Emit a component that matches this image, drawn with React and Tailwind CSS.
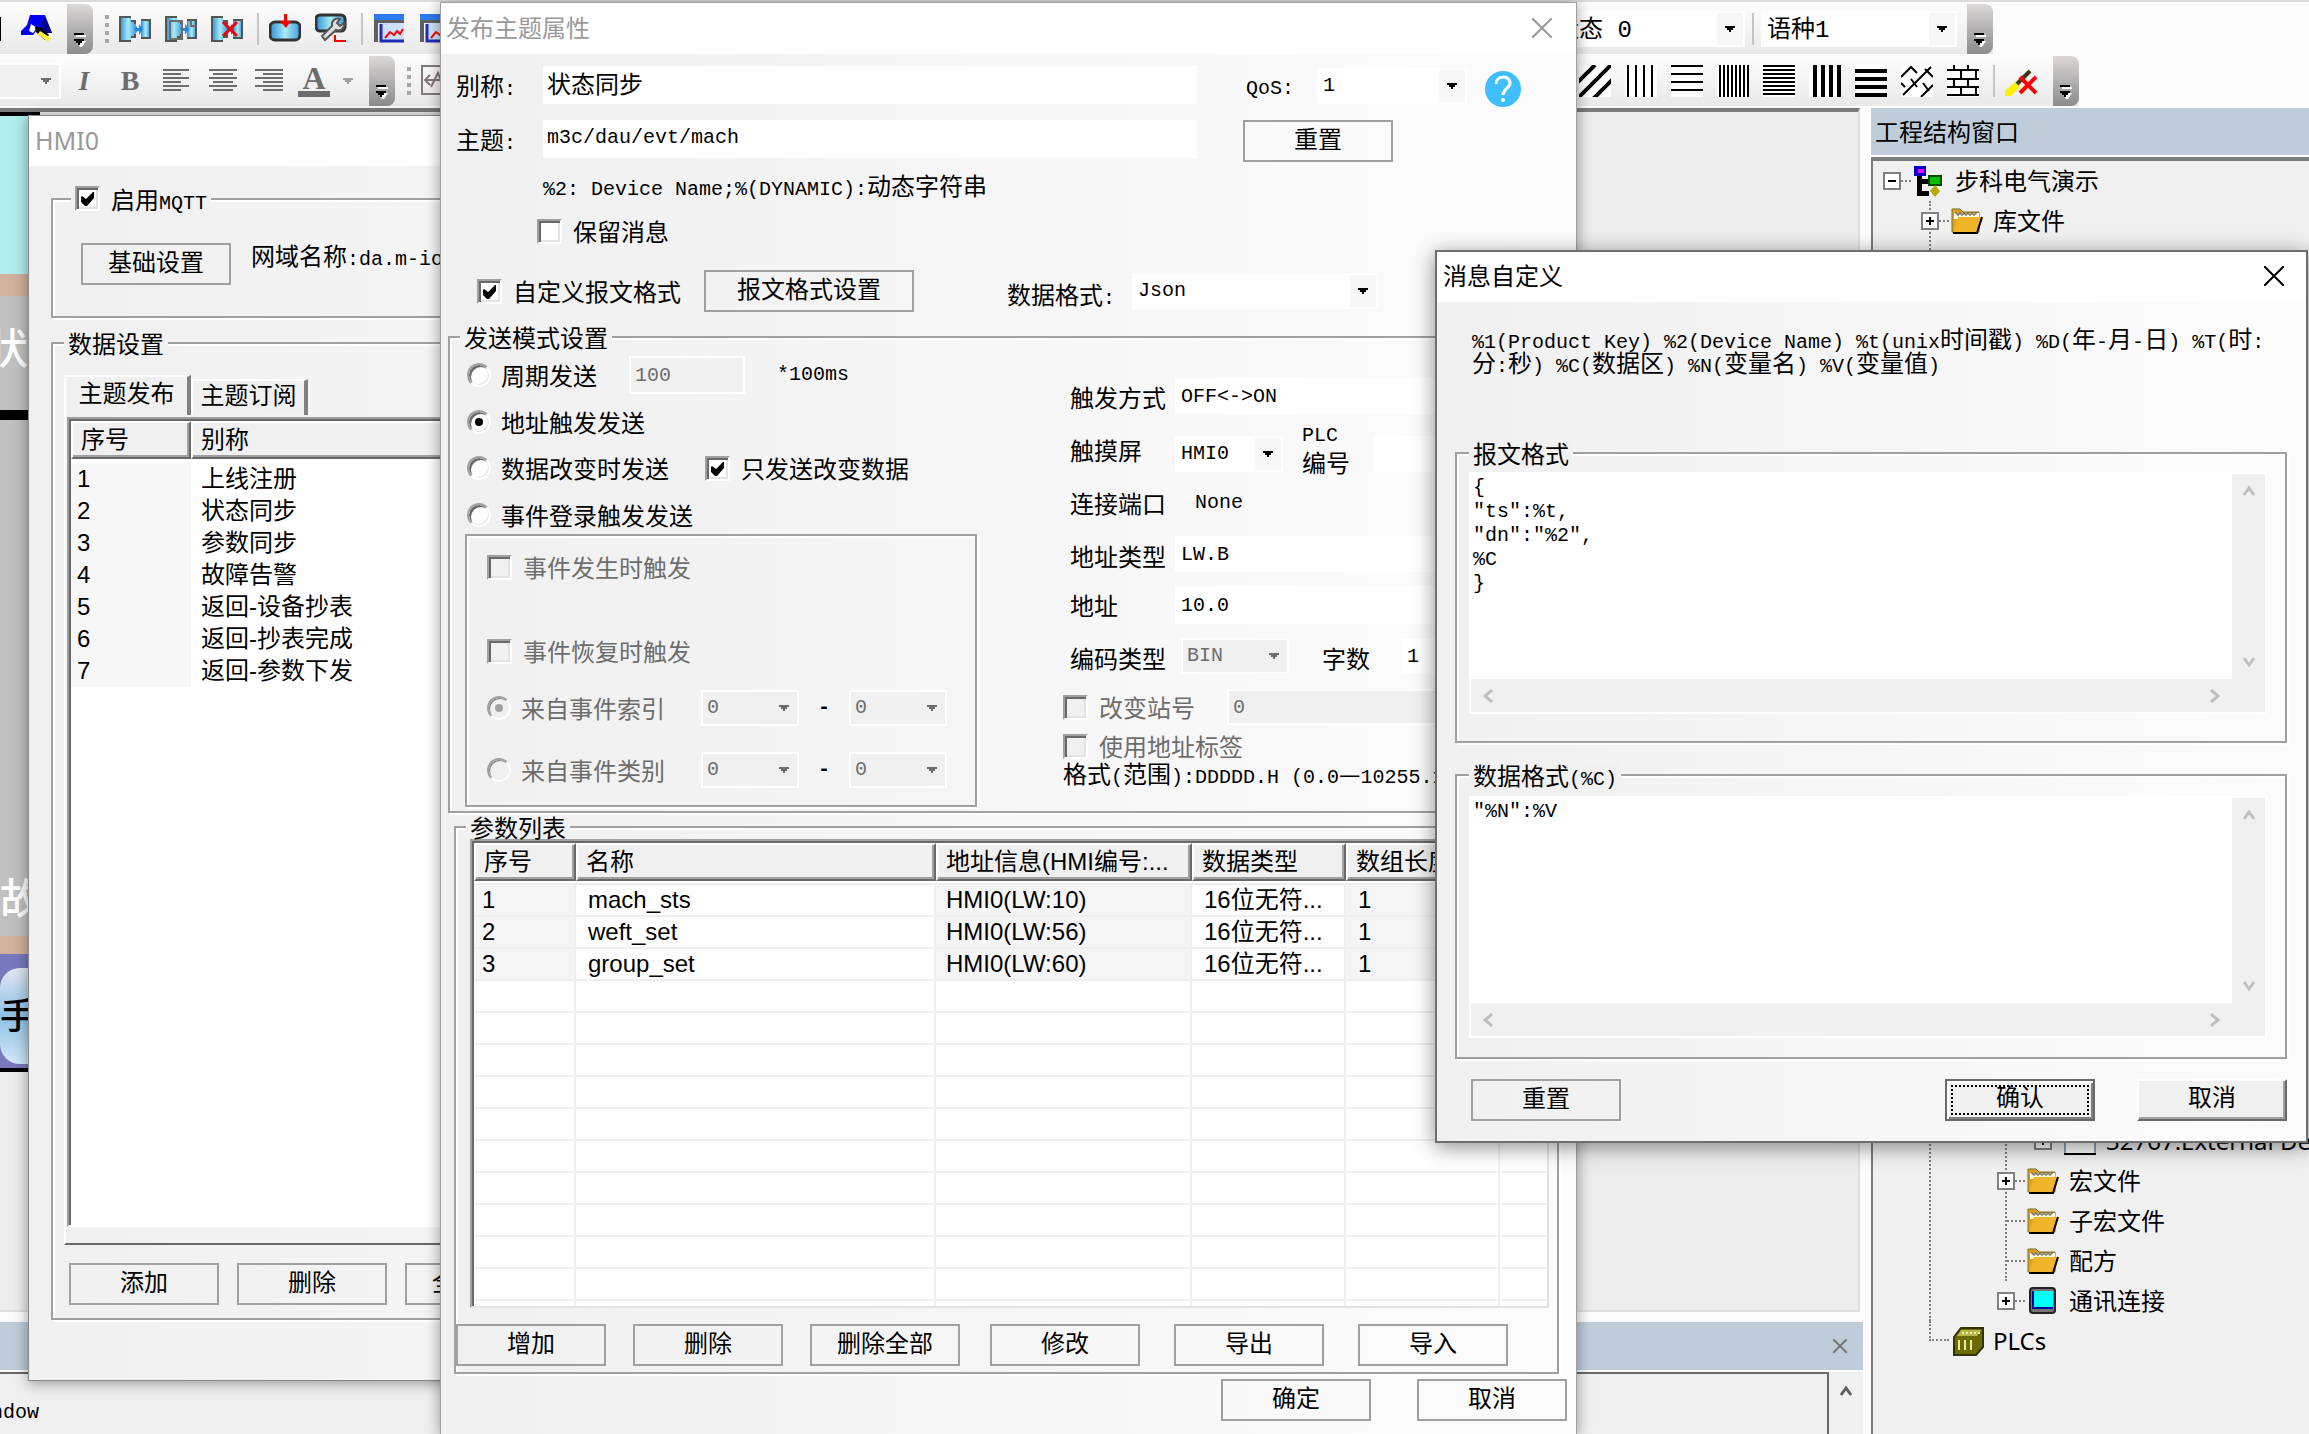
import { useState } from 'react';

const mono = "[font-family:'Liberation_Mono','Noto_Sans_CJK_SC',monospace]";
const sans = "[font-family:'Liberation_Sans','Noto_Sans_CJK_SC',sans-serif]";
const ui = "[font-family:'Noto_Sans','Noto_Sans_CJK_SC',sans-serif]";

const topics = ['上线注册', '状态同步', '参数同步', '故障告警', '返回-设备抄表', '返回-抄表完成', '返回-参数下发'];

const params = [
    { name: 'mach_sts', address: 'HMI0(LW:10)', type: '16位无符...', length: 1 },
    { name: 'weft_set', address: 'HMI0(LW:56)', type: '16位无符...', length: 1 },
    { name: 'group_set', address: 'HMI0(LW:60)', type: '16位无符...', length: 1 },
];

const emptyRows = Array.from({ length: 11 }, (_, i) => i);

// Chinese runs are a full em, latin runs half an em
const T = ({ children }) => (
    <span className="block h-6 leading-5 whitespace-pre">
        {children.split(/([\u2014\u2e80-\u9fff]+)/).map((part, i) =>
            i % 2 ? (
                <span key={i} className="text-[24px] leading-none [font-family:'Noto_Sans_CJK_SC',sans-serif]">{part}</span>
            ) : (
                <span key={i} className="text-[20px] leading-none">{part}</span>
            )
        )}
    </span>
);

const Button = ({ children, className = 'w-[150px]' }) => (
    <button type="button" className={`flex h-[42px] shrink-0 items-center justify-center overflow-hidden border-2 border-[#a0a0a0] pt-0.5 text-[24px] leading-6 ${className}`}>
        {children}
    </button>
);

const Check = ({ label, defaultChecked, disabled, className = '' }) => {
    const [checked, setChecked] = useState(!!defaultChecked);

    return (
        <label className={`flex shrink-0 items-center gap-[11px] ${disabled ? 'text-[#6d6d6d]' : ''} ${className}`}>
            <span className="grid">
                <input
                    type="checkbox"
                    checked={checked}
                    disabled={disabled}
                    onChange={(e) => setChecked(e.target.checked)}
                    className="col-start-1 row-start-1 h-[25px] w-[25px] appearance-none border-2 border-t-[#a0a0a0] border-r-white border-b-white border-l-[#a0a0a0] bg-white shadow-[inset_2px_2px_0_#696969,inset_-2px_-2px_0_#e3e3e3] disabled:bg-[#f0f0f0]"
                />
                {checked && (
                    <svg viewBox="0 0 25 25" className="pointer-events-none col-start-1 row-start-1 h-[25px] w-[25px]">
                        <path d="M6 11v5l4 4h2l7-8V6h-1l-7 7-4-3z" fill="#000" />
                    </svg>
                )}
            </span>
            <T>{label}</T>
        </label>
    );
};

const Radio = ({ label, name, defaultChecked, disabled }) => (
    <label className={`flex shrink-0 items-center gap-2.5 ${disabled ? 'text-[#6d6d6d]' : ''}`}>
        <input
            type="radio"
            name={name}
            defaultChecked={defaultChecked}
            disabled={disabled}
            className="grid h-6 w-6 appearance-none place-items-center rounded-full border-2 border-t-[#a0a0a0] border-r-white border-b-white border-l-[#a0a0a0] bg-white shadow-[inset_2px_2px_0_#696969,inset_-1px_-1px_0_#e3e3e3] before:h-2 before:w-2 before:rounded-full checked:before:bg-black disabled:bg-[#f0f0f0] disabled:shadow-[inset_1px_1px_0_#808080] disabled:checked:before:bg-[#a0a0a0]"
        />
        <T>{label}</T>
    </label>
);

const Arrow = ({ className = 'fill-black' }) => (
    <svg viewBox="0 0 10 6" className={`h-1.5 w-2.5 ${className}`}>
        <path d="M0 0h10v2H8v2H6v2H4V4H2V2H0z" />
    </svg>
);

const Select = ({ value, label, disabled, className, size = 'text-[20px]' }) => (
    <span className={`grid h-9 shrink-0 border-2 border-white ${disabled ? 'bg-[#f0f0f0]' : 'bg-white'} ${className}`}>
        <select aria-label={label} disabled={disabled} className={`col-start-1 row-start-1 h-8 w-full appearance-none pl-1 opacity-100 disabled:text-[#6d6d6d] ${size}`}>
            <option>{value}</option>
        </select>
        <span className={`pointer-events-none col-start-1 row-start-1 flex h-8 w-[26px] items-center justify-center justify-self-end ${disabled ? '' : 'bg-[#f7f7f7]'}`}>
            <Arrow className={disabled ? 'fill-[#6d6d6d]' : 'fill-black'} />
        </span>
    </span>
);

const Field = ({ value, label, disabled, className = 'h-9' }) => (
    <input
        aria-label={label}
        defaultValue={value}
        disabled={disabled}
        className={`min-w-0 border-2 border-white bg-white px-1 text-[20px] disabled:bg-[#f0f0f0] disabled:text-[#6d6d6d] ${className}`}
    />
);

const Group = ({ legend, className, legendClass = 'ml-2.5', children }) => (
    <fieldset className={`min-w-0 border-2 border-[#a0a0a0] shadow-[2px_2px_0_#fff,inset_2px_2px_0_#fff] ${className}`}>
        <legend className={`flex items-center bg-[#f1f1f1] ${legendClass}`}>
            <span className="px-1">{legend}</span>
        </legend>
        {children}
    </fieldset>
);

const Close = ({ className }) => (
    <button type="button" aria-label="关闭">
        <svg viewBox="0 0 20 20" className={`h-5 w-5 fill-none ${className}`}>
            <path d="M0 0l20 20M20 0L0 20" strokeWidth="2" />
        </svg>
    </button>
);

/* ---------- toolbars ---------- */

const Overflow = ({ className = '' }) => (
    <button type="button" aria-label="工具栏选项" className={`flex h-[50px] w-[26px] shrink-0 items-end justify-center rounded-r-lg bg-gradient-to-b from-[#dcd8d8] to-[#8c8c8c] pb-1.5 ${className}`}>
        <svg viewBox="0 0 14 16" className="h-4 w-3.5">
            <path d="M3 3h10v2H3zM3 9h10l-4 6H7z" fill="#fff" />
            <path d="M1 1h10v2H1zM1 7h10v2H9v2H7v2H5v-2H3V9H1z" fill="#000" />
        </svg>
    </button>
);

const Grip = () => (
    <span className="ml-3 flex w-1 shrink-0 flex-col gap-1">
        <i className="h-1 w-1 bg-[#a8a8a8]" />
        <i className="h-1 w-1 bg-[#a8a8a8]" />
        <i className="h-1 w-1 bg-[#a8a8a8]" />
        <i className="h-1 w-1 bg-[#a8a8a8]" />
    </span>
);

const Sep = ({ className = '' }) => <span className={`h-8 w-0.5 shrink-0 bg-[#c4c4c4] ${className}`} />;

const Tool = ({ label, children }) => (
    <button type="button" aria-label={label} className="h-8 w-8 shrink-0">
        <svg viewBox="0 0 32 32" className="h-8 w-8">{children}</svg>
    </button>
);

const Doors = ({ children }) => (
    <>
        <defs>
            <linearGradient id="door">
                <stop offset="0" stopColor="#2f8fd8" />
                <stop offset=".5" stopColor="#a8ecf4" />
                <stop offset="1" stopColor="#3f9be0" />
            </linearGradient>
        </defs>
        <path d="M1 3h11v4h5v18h-5v4H1z" fill="url(#door)" />
        <path d="M12 4H1v24h11M12 8h4v3M12 24h4v-3" fill="none" stroke="#555" strokeWidth="2" />
        <path d="M22 7h9v18h-9z" fill="url(#door)" />
        <path d="M22 7h9v18h-9" fill="none" stroke="#555" strokeWidth="2" />
        <path d="M15 16l3-3v2h2v-4l4 5-4 6v-4h-2v2z" fill="#2389dc" />
        {children}
    </>
);

const Chart = () => (
    <>
        <path d="M1 1h30v6H1z" fill="#2d7bf0" />
        <path d="M1 7h30v3H5v19H1z" fill="#606060" />
        <path d="M7 10h24v19H7z" fill="#cfe0fb" />
        <path d="M8 11v17h23" fill="none" stroke="#1c2fb4" strokeWidth="3" />
        <path d="M12 25l5-6 4 3 3-4 3 3 3-5" fill="none" stroke="#f00" strokeWidth="2" />
    </>
);

const Toolbar = () => (
    <header className="flex shrink-0 flex-col gap-0.5 bg-[#fcfcfc] pb-0.5">
        <div className="h-0.5 bg-[#dcdcdc]" />
        <div className="flex h-[50px] w-[1993px] items-center bg-gradient-to-b from-[#fdfdfd] to-[#e9e9e9]">
            <div className="flex w-[1549px] shrink-0 items-center">
                <span className="mr-5 h-6 w-px bg-black" />
                <Tool label="填充">
                    <path d="M9 2h15l7 18h-9l-4-6-6 8H0v-4l6-6z" fill="#0000f0" />
                    <path d="M24 4l7 16h-6l-5-10z" fill="#00008b" />
                    <path d="M10 11l6 4-4 5-4-2z" fill="#fff" />
                    <path d="M14 14h6l8 8-4 5-9-8z" fill="#000" />
                    <path d="M19 18l11 7-3 4-10-8z" fill="#ffef3c" />
                </Tool>
                <Overflow className="ml-3.5" />
                <Grip />
                <div className="ml-2.5 flex gap-3.5">
                    <Tool label="打开窗口"><Doors /></Tool>
                    <Tool label="全部窗口"><Doors><path d="M5 8h12v18H5zM26 7v6h5" fill="none" stroke="#6d6d6d" strokeWidth="2" /></Doors></Tool>
                    <Tool label="关闭窗口"><Doors><path d="M12 9l14 14M26 9L12 23" stroke="#f00000" strokeWidth="3" /></Doors></Tool>
                </div>
                <Sep className="mr-2.5 ml-3.5" />
                <div className="flex gap-3.5">
                    <Tool label="下载">
                        <rect x="1" y="9" width="30" height="18" rx="5" fill="url(#door)" stroke="#333" strokeWidth="3" />
                        <path d="M15 1h3v7h4l-5 7-6-7h4z" fill="#f00" />
                    </Tool>
                    <Tool label="调试">
                        <rect x="1" y="2" width="29" height="16" rx="4" fill="url(#door)" stroke="#333" strokeWidth="3" />
                        <path d="M25 6a6 6 0 0 0-8 7L7 23l3 4 11-10a6 6 0 0 0 8-7l-4 3-3-3z" fill="#ddd" stroke="#555" strokeWidth="2" />
                        <path d="M20 22v6h11" fill="none" stroke="#f00" strokeWidth="2" />
                    </Tool>
                </div>
                <Sep className="mr-2.5 ml-3.5" />
                <div className="flex gap-3.5">
                    <Tool label="趋势图"><Chart /></Tool>
                    <Tool label="曲线图"><Chart /></Tool>
                </div>
            </div>
            <Select label="状态" value="状态 0" size="text-[24px]" className="w-[196px]" />
            <Sep className="mx-[7px]" />
            <Select label="语种" value="语种1" size="text-[24px]" className="w-[196px]" />
            <Overflow className="ml-2.5" />
        </div>
        <div className="flex h-[50px] w-[2079px] items-center bg-gradient-to-b from-[#fdfdfd] to-[#e9e9e9]">
            <div className="flex w-[1579px] shrink-0 items-center">
                <span className="flex h-9 w-[61px] items-center justify-end border-2 border-l-0 border-white bg-[#f0f0f0] pr-2">
                    <Arrow className="fill-[#6d6d6d]" />
                </span>
                <div className="ml-[7px] flex gap-3.5 text-[#6d6d6d]">
                    <button type="button" className="h-8 w-8 text-[28px] leading-8 font-bold italic [font-family:'Liberation_Serif',serif]">I</button>
                    <button type="button" className="h-8 w-8 text-[28px] leading-8 font-bold [font-family:'Liberation_Serif',serif]">B</button>
                    <Tool label="左对齐"><path d="M3 5h26M3 9h18M3 13h26M3 17h18M3 21h26M3 25h18" stroke="#6d6d6d" strokeWidth="2" /></Tool>
                    <Tool label="居中"><path d="M3 5h28M7 9h20M3 13h28M7 17h20M3 21h28M7 25h20" stroke="#6d6d6d" strokeWidth="2" /></Tool>
                    <Tool label="右对齐"><path d="M3 5h28M11 9h20M3 13h28M11 17h20M3 21h28M11 25h20" stroke="#6d6d6d" strokeWidth="2" /></Tool>
                    <button type="button" className="h-8 w-8 border-b-[6px] border-[#6d6d6d] text-[32px] leading-6 font-bold [font-family:'Liberation_Serif',serif]">A</button>
                </div>
                <Arrow className="ml-[13px] fill-[#a0a0a0]" />
                <Overflow className="ml-4" />
                <Grip />
                <span className="ml-2.5 flex">
                    <Tool label="对齐"><path d="M1 1h30v28H1zM4 15h24M9 10l-5 5 5 5M10 22l7-14 6 14" fill="none" stroke="#857878" strokeWidth="2" /></Tool>
                </span>
            </div>
            <div className="flex gap-3.5">
                <Tool label="斜线"><path d="M0 0h32v32H0z" fill="#fff" /><path d="M-2 18L16 0M-2 34L34-2M14 34l20-20" stroke="#000" strokeWidth="4" /></Tool>
                <Tool label="细竖线"><path d="M0 0h32v32H0z" fill="#fff" /><path d="M3 0v32M11 0v32M19 0v32M27 0v32" stroke="#000" strokeWidth="2" /></Tool>
                <Tool label="细横线"><path d="M0 0h32v32H0z" fill="#fff" /><path d="M0 1h32M0 9h32M0 17h32M0 25h32" stroke="#000" strokeWidth="2" /></Tool>
                <Tool label="密竖线"><path d="M0 0h32v32H0z" fill="#fff" /><path d="M3 0v32M7 0v32M11 0v32M15 0v32M19 0v32M23 0v32M27 0v32M31 0v32" stroke="#000" strokeWidth="2" /></Tool>
                <Tool label="密横线"><path d="M0 0h32v32H0z" fill="#fff" /><path d="M0 1h32M0 5h32M0 9h32M0 13h32M0 17h32M0 21h32M0 25h32M0 29h32" stroke="#000" strokeWidth="2" /></Tool>
                <Tool label="粗竖线"><path d="M0 0h32v32H0z" fill="#fff" /><path d="M6 0v32M14 0v32M22 0v32M30 0v32" stroke="#000" strokeWidth="4" /></Tool>
                <Tool label="粗横线"><path d="M0 0h32v32H0z" fill="#fff" /><path d="M0 6h32M0 14h32M0 22h32M0 30h32" stroke="#000" strokeWidth="4" /></Tool>
                <Tool label="编织"><path d="M0 0h32v32H0z" fill="#fff" /><path d="M0 12L10 2l6 6M2 30L30 2M20 32l12-12M10 14l6 8M22 18l6 8M24 4l8 8M0 18l4 4" fill="none" stroke="#000" strokeWidth="2" /></Tool>
                <Tool label="砖墙"><path d="M0 0h32v32H0z" fill="#fff" /><path d="M0 5h32M0 14h32M0 22h32M0 30h32M7 0v5M21 0v5M14 5v9M29 5v9M7 14v8M21 14v8M14 22v8M29 22v8" stroke="#000" strokeWidth="2" /></Tool>
            </div>
            <Sep className="mr-2.5 ml-3.5" />
            <Tool label="清除">
                <path d="M25 6L11 20" stroke="#3c3c14" strokeWidth="4" />
                <path d="M10 17l5 5-9 9H0v-5z" fill="#ffef00" />
                <path d="M15 12l16 16M31 12L15 28" stroke="#f00" strokeWidth="4" />
            </Tool>
            <Overflow className="ml-4" />
        </div>
    </header>
);

/* ---------- project tree ---------- */

const Expander = ({ open, className = '' }) => (
    <button type="button" aria-label="展开" className={`h-[18px] w-[18px] shrink-0 ${className}`}>
        <svg viewBox="0 0 18 18" className="h-[18px] w-[18px]">
            <path d="M1 1h16v16H1z" fill="#fff" stroke="#808080" strokeWidth="2" />
            <path d={open ? 'M5 9h8' : 'M5 9h8M9 5v8'} stroke="#000" strokeWidth="2" />
        </svg>
    </button>
);

const Dots = ({ className }) => <span className={`mr-0.5 shrink-0 border-t-2 border-dotted border-[#808080] ${className}`} />;

const Folder = () => (
    <svg viewBox="0 0 32 28" className="h-7 w-8 shrink-0">
        <path d="M1 25V2h8l3 3h16v20z" fill="#dba21a" stroke="#7a6a30" strokeWidth="1" />
        <path d="M3 6h25v6H3z" fill="#fffbe0" />
        <path d="M4 6h2v2h2V6h2v2h2V6h2v2h2V6h2v2h2V6h2v2h2V6h2" fill="none" stroke="#554" strokeWidth="1" />
        <path d="M7 10h25l-5 16H2z" fill="#efb427" />
        <path d="M31 10l-5 16H2" fill="none" stroke="#000" strokeWidth="2" />
    </svg>
);

const Branch = ({ label, icon, closed }) => (
    <div className="flex h-10 items-center">
        {closed && <Expander className="-ml-[10px]" />}
        <Dots className={closed ? 'w-2.5' : 'w-[18px]'} />
        {icon || <Folder />}
        <span className="ml-2.5">{label}</span>
    </div>
);

const ProjectPanel = () => (
    <aside className={`ml-2 flex min-w-0 flex-1 flex-col text-[24px] leading-6 ${ui}`}>
        <h2 className="flex h-[47px] shrink-0 items-center bg-[#bfcddb] pl-1">工程结构窗口</h2>
        <div className="mt-0.5 flex-1 overflow-hidden border-t-4 border-l-2 border-[#7b7b7b] bg-[#f0f0f0] whitespace-nowrap">
            <div className="flex h-10 items-center pl-[10px]">
                <Expander open />
                <Dots className="w-2.5" />
                <svg viewBox="0 0 32 32" className="h-8 w-8 shrink-0">
                    <path d="M4 10h5v4h7v5H9v7h7v5H4z" fill="#000" />
                    <path d="M1 1h12v10H1z" fill="#0000c8" />
                    <path d="M5 4h6v4H5z" fill="#f0f" />
                    <path d="M16 11h12v9H16z" fill="#00c000" stroke="#004800" strokeWidth="2" />
                    <path d="M22 20l5 6-5 6-5-6z" fill="#b8a800" />
                </svg>
                <span className="ml-2.5">步科电气演示</span>
            </div>
            <div className="ml-[56px] border-l-2 border-dotted border-[#808080]">
                <Branch label="库文件" closed />
                {/* branches behind the message window */}
                <div className="h-[880px]" />
                <div className="ml-[74px] border-l-2 border-dotted border-[#808080]">
                    <div className="flex h-10 items-center pl-[27px]">
                        <Expander />
                        <Dots className="w-2.5" />
                        <svg viewBox="0 0 32 28" className="h-7 w-8 shrink-0">
                            <path d="M1 1h30v26H1z" fill="#fff" stroke="#8aa0b8" strokeWidth="2" />
                            <path d="M0 27h32" stroke="#000" strokeWidth="2" />
                        </svg>
                        <span className="ml-2.5">32767.External Device</span>
                    </div>
                    <Branch label="宏文件" closed />
                    <Branch label="子宏文件" />
                    <Branch label="配方" />
                </div>
                <div className="ml-[76px]">
                    <Branch
                        label="通讯连接"
                        closed
                        icon={
                            <svg viewBox="0 0 32 28" className="h-7 w-8 shrink-0">
                                <rect x="3" y="1" width="25" height="25" rx="3" fill="#777" stroke="#222" strokeWidth="2" />
                                <path d="M5 4h21v18H5z" fill="#0000a0" />
                                <path d="M7 4h19v16H7z" fill="#0ff" />
                            </svg>
                        }
                    />
                </div>
            </div>
            <div className="ml-[56px] flex h-10 items-center">
                <span className="h-5 w-5 shrink-0 self-start border-b-2 border-l-2 border-dotted border-[#808080]" />
                <svg viewBox="0 0 32 32" className="ml-1 h-8 w-8 shrink-0">
                    <path d="M1 12l7-9h22v19l-7 8H1z" fill="#6b6b00" stroke="#333300" strokeWidth="2" />
                    <path d="M8 5h20l-4 6H4z" fill="#b8b84a" />
                    <path d="M6 15v10M12 15v10M18 15v10" stroke="#e8e8a0" strokeWidth="2" />
                    <path d="M9 8h18" stroke="#eeeeb0" strokeWidth="2" strokeDasharray="2 2" />
                </svg>
                <span className="ml-2">PLCs</span>
            </div>
        </div>
    </aside>
);

/* ---------- windows ---------- */

// 3D header cell of the list views
const Th = ({ children }) => (
    <th className="h-[38px] overflow-hidden border-2 border-t-white border-r-[#696969] border-b-[#696969] border-l-white bg-[#f0f0f0] px-2 text-left font-normal whitespace-nowrap shadow-[inset_-2px_-2px_0_#a0a0a0]">
        {children}
    </th>
);

const HmiWindow = () => (
    <section className="absolute top-[115px] left-[28px] w-[480px] border border-[#888] bg-gradient-to-r from-[#f0f0f0] to-[#f5f5f5] shadow-[0_2px_14px_rgba(0,0,0,0.4)]">
        <h2 className={`flex h-[50px] items-center bg-white pl-1.5 text-[25px] text-[#999] ${ui}`}>HMI0</h2>
        <div className="pt-[20px] pb-[60px] pl-[22px]">
            <Group className="pb-[31px]" legendClass="ml-[18px]" legend={<Check label="启用MQTT" defaultChecked />}>
                <div className="flex items-start pt-[32px] pl-[28px] whitespace-nowrap">
                    <Button>基础设置</Button>
                    <span className="ml-5"><T>网域名称:da.m-iot.com</T></span>
                </div>
            </Group>
            <Group className="mt-[13px] pt-5 pb-[13px] pl-[11px]" legendClass="" legend={<T>数据设置</T>}>
                <div role="tablist" className="flex items-end text-[24px] leading-6">
                    <button type="button" role="tab" className="h-10 w-[127px] border-2 border-r-4 border-b-0 border-white border-r-[#808080] bg-[#f0f0f0]">主题发布</button>
                    <button type="button" role="tab" className="h-9 w-[117px] border-2 border-r-4 border-b-0 border-white border-r-[#808080] bg-[#f0f0f0]">主题订阅</button>
                </div>
                <div className="border-b-2 border-l-2 border-[#696969] border-l-white pt-0.5 pb-4 pl-px">
                    <div className="h-[810px] border-2 border-[#a0a0a0] border-b-white bg-white shadow-[inset_2px_2px_0_#696969]">
                        <table className={`w-full table-fixed border-separate border-spacing-0 pt-0.5 pl-0.5 text-[24px] leading-6 ${sans}`}>
                            <colgroup>
                                <col className="w-[120px]" />
                                <col />
                            </colgroup>
                            <thead>
                                <tr><Th>序号</Th><Th>别称</Th></tr>
                                <tr className="h-1"><td /><td /></tr>
                            </thead>
                            <tbody>
                                {topics.map((topic, i) => (
                                    <tr key={topic} className="h-8">
                                        <td className="bg-[#f7f7f7] pl-1.5">{i + 1}</td>
                                        <td className="pl-2.5">{topic}</td>
                                    </tr>
                                ))}
                            </tbody>
                        </table>
                    </div>
                </div>
                <div className="mt-[18px] ml-[5px] flex gap-[18px] overflow-hidden">
                    <Button>添加</Button>
                    <Button>删除</Button>
                    <Button>全部删除</Button>
                </div>
            </Group>
        </div>
    </section>
);

const Range = ({ label, defaultChecked }) => (
    <div className="mt-[26px] flex items-center">
        <Radio name="source" label={label} defaultChecked={defaultChecked} disabled />
        <Select label={`${label}起`} value="0" disabled className="ml-9 w-[98px]" />
        <span className="w-[50px] text-center text-[20px] font-bold">-</span>
        <Select label={`${label}止`} value="0" disabled className="w-[98px]" />
    </div>
);

const SendMode = () => (
    <Group className="mt-[13px] mr-[16px] ml-[7px] pb-1" legend={<T>发送模式设置</T>}>
        <div className="flex pl-[15px]">
            <div className="w-[512px] shrink-0 pt-[7px]">
                <div className="flex h-[38px] items-center pl-0.5">
                    <Radio name="mode" label="周期发送" />
                    <Field label="周期" value="100" disabled className="ml-8 h-[38px] w-[116px]" />
                    <span className="ml-8 pt-1"><T>*100ms</T></span>
                </div>
                <div className="mt-[15px] flex h-[26px] items-center pl-0.5"><Radio name="mode" label="地址触发发送" defaultChecked /></div>
                <div className="mt-5 flex h-[26px] items-center pl-0.5">
                    <Radio name="mode" label="数据改变时发送" />
                    <Check label="只发送改变数据" defaultChecked className="ml-9" />
                </div>
                <div className="mt-[21px] flex h-[26px] items-center pl-0.5"><Radio name="mode" label="事件登录触发发送" /></div>
                <div className="mt-[6px] h-[273px] border-2 border-[#a0a0a0] pt-[18px] pl-5 shadow-[2px_2px_0_#fff,inset_2px_2px_0_#fff]">
                    <Check label="事件发生时触发" disabled className="h-[26px]" />
                    <Check label="事件恢复时触发" disabled className="mt-[58px] h-[26px]" />
                    <Range label="来自事件索引" defaultChecked />
                    <Range label="来自事件类别" />
                </div>
            </div>
            <div className="ml-[86px] min-w-0 flex-1 pt-[22px]">
                <div className="flex h-[50px] items-center pl-[7px]">
                    <span className="w-[105px] shrink-0 pt-0.5"><T>触发方式</T></span>
                    <Field label="触发方式" value="OFF<->ON" className="h-9 flex-1" />
                </div>
                <div className="mt-2 flex h-[50px] items-center pl-[7px]">
                    <span className="w-[105px] shrink-0 pb-2"><T>触摸屏</T></span>
                    <Select label="触摸屏" value="HMI0" className="w-[108px]" />
                    <span className="ml-[19px] flex w-[71px] shrink-0 flex-col pb-2"><T>PLC</T><T>编号</T></span>
                    <Field label="PLC编号" value="" className="h-9 flex-1" />
                </div>
                <div className="flex h-[46px] items-center pt-0.5 pl-[7px]">
                    <span className="w-[125px] shrink-0"><T>连接端口</T></span>
                    <span className="pt-1"><T>None</T></span>
                </div>
                <div className="mt-1 flex h-[50px] items-center pl-[7px]">
                    <span className="w-[105px] shrink-0 pt-1"><T>地址类型</T></span>
                    <Field label="地址类型" value="LW.B" className="h-9 flex-1" />
                </div>
                <div className="flex h-[52px] items-center pl-[7px]">
                    <span className="w-[105px] shrink-0"><T>地址</T></span>
                    <Field label="地址" value="10.0" className="h-[38px] flex-1" />
                </div>
                <div className="flex h-[50px] items-center pl-[7px]">
                    <span className="w-[111px] shrink-0 pt-1"><T>编码类型</T></span>
                    <Select label="编码类型" value="BIN" disabled className="w-[108px]" />
                    <span className="ml-[33px] w-[79px] shrink-0 pt-1"><T>字数</T></span>
                    <Field label="字数" value="1" className="h-9 flex-1" />
                </div>
                <div className="flex h-[52px] items-center">
                    <Check label="改变站号" disabled className="w-[164px]" />
                    <Field label="站号" value="0" disabled className="h-9 flex-1" />
                </div>
                <Check label="使用地址标签" disabled className="h-[26px]" />
                <div className="flex h-[28px] items-center overflow-hidden"><T>格式(范围):DDDDD.H (0.0—10255.15)</T></div>
            </div>
        </div>
    </Group>
);

const ParamTable = () => (
    <div className="h-[469px] overflow-hidden border-2 border-[#a0a0a0] border-r-[#e3e3e3] border-b-[#e3e3e3] bg-white shadow-[inset_2px_2px_0_#696969]">
        <table className={`w-full table-fixed border-separate border-spacing-0 pt-0.5 pl-0.5 text-[24px] leading-6 whitespace-nowrap ${sans}`}>
            <colgroup>
                <col className="w-[102px]" />
                <col className="w-[360px]" />
                <col className="w-[256px]" />
                <col className="w-[154px]" />
                <col className="w-[154px]" />
                <col />
            </colgroup>
            <thead>
                <tr>
                    <Th>序号</Th>
                    <Th>名称</Th>
                    <Th>地址信息(HMI编号:...</Th>
                    <Th>数据类型</Th>
                    <Th>数组长度</Th>
                    <Th />
                </tr>
                <tr className="h-1"><td colSpan={6} className="border-b-2 border-[#efefef]" /></tr>
            </thead>
            <tbody>
                {params.map((param, i) => (
                    <tr key={param.name} className="h-8">
                        <td className="border-r-2 border-b-2 border-[#efefef] bg-[#f5f5f5] pl-2">{i + 1}</td>
                        <td className="border-r-2 border-b-2 border-[#efefef] pl-3">{param.name}</td>
                        <td className="border-r-2 border-b-2 border-[#efefef] bg-[#f5f5f5] pl-2.5">{param.address}</td>
                        <td className="border-r-2 border-b-2 border-[#efefef] pl-3">{param.type}</td>
                        <td className="border-r-2 border-b-2 border-[#efefef] bg-[#f5f5f5] pl-3">{param.length}</td>
                        <td className="border-b-2 border-[#efefef]" />
                    </tr>
                ))}
                {emptyRows.map((row) => (
                    <tr key={row} className="h-8">
                        <td className="border-r-2 border-b-2 border-[#efefef]" />
                        <td className="border-r-2 border-b-2 border-[#efefef]" />
                        <td className="border-r-2 border-b-2 border-[#efefef]" />
                        <td className="border-r-2 border-b-2 border-[#efefef]" />
                        <td className="border-r-2 border-b-2 border-[#efefef]" />
                        <td className="border-b-2 border-[#efefef]" />
                    </tr>
                ))}
            </tbody>
        </table>
    </div>
);

const TopicWindow = () => (
    <section className="absolute top-0.5 bottom-0 left-[440px] w-[1137px] overflow-hidden border border-b-0 border-[#a0a0a0] bg-gradient-to-r from-[#f0f0f0] to-[#fcfcfc] shadow-[0_2px_14px_rgba(0,0,0,0.4)]">
        <div className="flex h-[51px] items-center justify-between bg-white pr-6 pb-0.5 pl-[5px]">
            <h2 className={`text-[24px] text-[#999] ${ui}`}>发布主题属性</h2>
            <Close className="stroke-[#999]" />
        </div>
        <div className="pt-3 pl-[15px]">
            <div className="flex h-[38px] items-center">
                <label htmlFor="alias" className="w-[87px] shrink-0"><T>别称:</T></label>
                <input id="alias" defaultValue="状态同步" className="h-[38px] w-[654px] bg-white px-1 pb-1.5 text-[24px]" />
                <span className="ml-[49px] w-[71px] shrink-0 pt-3"><T>QoS:</T></span>
                <Select label="QoS" value="1" className="mt-0.5 w-[150px]" />
                <button type="button" aria-label="帮助" className="mt-2 ml-[18px] h-9 w-9">
                    <svg viewBox="0 0 36 36" className="h-9 w-9">
                        <circle cx="18" cy="18" r="18" fill="#3fbfff" />
                        <path d="M11 13c0-9 14-9 14-1 0 5-7 6-7 12" fill="none" stroke="#fff" strokeWidth="3" />
                        <circle cx="18" cy="29" r="2" fill="#fff" />
                    </svg>
                </button>
            </div>
            <div className="mt-4 flex items-start">
                <label htmlFor="topic" className="flex h-[38px] w-[87px] shrink-0 items-center"><T>主题:</T></label>
                <input id="topic" defaultValue="m3c/dau/evt/mach" className="h-[38px] w-[654px] bg-white px-1 pb-1 text-[20px]" />
                <Button className="ml-[46px] w-[150px]">重置</Button>
            </div>
        </div>
        <p className="mt-2 flex h-[30px] items-center pl-[102px]"><T>%2: Device Name;%(DYNAMIC):动态字符串</T></p>
        <Check label="保留消息" className="mt-[18px] h-[26px] pl-[96px]" />
        <div className="mt-[26px] flex items-center pl-[36px]">
            <Check label="自定义报文格式" defaultChecked />
            <Button className="ml-[23px] w-[210px]">报文格式设置</Button>
            <span className="ml-[93px] w-[125px] shrink-0 pt-1.5"><T>数据格式:</T></span>
            <Select label="数据格式" value="Json" className="w-[246px]" />
        </div>
        <SendMode />
        <Group className="mt-0.5 mr-[17px] ml-[13px] pb-1.5" legend={<T>参数列表</T>}>
            <div className="pr-2 pl-[14px]">
                <ParamTable />
            </div>
            <div className="mt-4 flex">
                <div className="flex gap-[27px]">
                    <Button>增加</Button>
                    <Button>删除</Button>
                    <Button>删除全部</Button>
                </div>
                <div className="ml-[30px] flex gap-[34px]">
                    <Button>修改</Button>
                    <Button>导出</Button>
                    <Button>导入</Button>
                </div>
            </div>
        </Group>
        <div className="mt-[5px] flex justify-end gap-[46px] pr-[9px]">
            <Button>确定</Button>
            <Button>取消</Button>
        </div>
    </section>
);

const Chevron = ({ d, className = 'stroke-[#bfbfbf]' }) => (
    <svg viewBox="0 0 14 14" className={`h-3.5 w-3.5 fill-none stroke-[3] ${className}`}>
        <path d={d} />
    </svg>
);

const CodeBox = ({ label, value }) => (
    <div className="grid h-[242px] grid-cols-[1fr_33px] grid-rows-[1fr_33px] border-2 border-white bg-[#f0f0f0]">
        <textarea aria-label={label} defaultValue={value} wrap="off" className="resize-none overflow-hidden bg-white pt-0.5 pl-0.5 text-[20px] leading-6" />
        <div className="flex flex-col items-center justify-between py-2.5">
            <Chevron d="M2 11l5-7 5 7" />
            <Chevron d="M2 3l5 7 5-7" />
        </div>
        <div className="flex items-center justify-between px-2.5">
            <Chevron d="M11 1L4 7l7 6" />
            <Chevron d="M3 1l7 6-7 6" />
        </div>
    </div>
);

const MessageWindow = () => (
    <section className="absolute top-[250px] right-px left-[1435px] border-2 border-[#6e6e6e] bg-gradient-to-r from-[#f0f0f0] to-[#fcfcfc] pb-5 shadow-[0_4px_20px_rgba(0,0,0,0.45)]">
        <div className="flex h-[50px] items-center justify-between bg-white pr-[22px] pb-0.5 pl-1.5">
            <h2 className={`text-[24px] ${ui}`}>消息自定义</h2>
            <Close className="stroke-black" />
        </div>
        <p className="flex flex-col pt-6 pl-[35px]">
            <T>%1(Product Key) %2(Device Name) %t(unix时间戳) %D(年-月-日) %T(时:</T>
            <T>分:秒) %C(数据区) %N(变量名) %V(变量值)</T>
        </p>
        <Group className="mt-[67px] mr-[19px] ml-[18px] pt-[7px] pr-[18px] pb-[27px] pl-3" legendClass="" legend={<T>报文格式</T>}>
            <CodeBox label="报文格式" value={'{\n"ts":%t,\n"dn":"%2",\n%C\n}'} />
        </Group>
        <Group className="mt-5 mr-[19px] ml-[18px] pt-[9px] pr-[18px] pb-[19px] pl-3" legendClass="" legend={<T>数据格式(%C)</T>}>
            <CodeBox label="数据格式(%C)" value={'"%N":%V'} />
        </Group>
        <div className="mt-5 flex justify-between pr-[19px] pl-[34px]">
            <Button>重置</Button>
            <div className="flex gap-[42px] text-[24px]">
                <button type="button" className="h-[42px] w-[150px] border-2 border-[#696969] bg-[#f0f0f0] p-1 shadow-[inset_2px_2px_0_#fff,inset_-2px_-2px_0_#808080]">
                    <span className="flex h-full items-center justify-center border-2 border-dotted border-black">确认</span>
                </button>
                <button type="button" className="flex h-[42px] w-[150px] items-center justify-center border-2 border-white border-r-[#696969] border-b-[#696969] bg-[#f0f0f0] shadow-[inset_-2px_-2px_0_#a0a0a0]">取消</button>
            </div>
        </div>
    </section>
);

// Edge of the touch screen page that is being edited
const Screen = () => (
    <div className={`w-[40px] shrink-0 overflow-hidden text-[42px] leading-10 font-medium text-white ${ui}`}>
        <div className="h-[162px] border-t-4 border-black bg-[#b0eeee]" />
        <div className="h-[22px] bg-[#d2b19d]" />
        <div className="flex h-[114px] justify-end bg-[#c0c0c0] pt-8 pr-3">状</div>
        <div className="h-2.5 bg-black" />
        <div className="flex h-[516px] flex-col justify-end bg-[#c0c0c0] pb-[18px]">故</div>
        <div className="h-[18px] bg-[#d2b19d]" />
        <div className="h-[114px] bg-[#7878bc] pt-[14px]">
            <div className="h-24 rounded-l-[20px] bg-gradient-to-b from-[#e4e8f4] via-[#8cc0e4] to-[#d4e8f8] pt-7 text-[36px] text-black">手</div>
        </div>
        <div className="h-1 bg-black" />
    </div>
);

const App = () => (
    <div className={`relative flex h-screen w-full flex-col overflow-hidden bg-[#fcfcfc] text-[20px] text-black ${mono}`}>
        <Toolbar />
        <div className="flex min-h-0 flex-1">
            <main className="flex w-[1863px] shrink-0 flex-col">
                <div className="mr-[3px] flex flex-1 border-t-4 border-r-2 border-b-2 border-[#e0e0e0] border-t-[#7b7b7b] bg-[#ececec]">
                    <Screen />
                </div>
                <div className="mt-2.5 flex h-12 shrink-0 items-center justify-end bg-[#bfcddb] pr-4">
                    <svg viewBox="0 0 14 14" className="h-3.5 w-3.5 stroke-[#777] stroke-2"><path d="M0 0l14 14M14 0L0 14" /></svg>
                </div>
                <div className="mt-0.5 flex h-[62px] shrink-0 bg-[#f0f0f0]">
                    <div className="flex-1 overflow-hidden border-t-2 border-r-2 border-[#696969] pt-6">
                        <div className="flex w-[39px] justify-end">Window</div>
                    </div>
                    <div className="flex w-[34px] justify-center pt-3">
                        <Chevron d="M2 11l5-7 5 7" className="stroke-[#606060]" />
                    </div>
                </div>
            </main>
            <ProjectPanel />
        </div>
        <HmiWindow />
        <TopicWindow />
        <MessageWindow />
    </div>
);

export default App;
